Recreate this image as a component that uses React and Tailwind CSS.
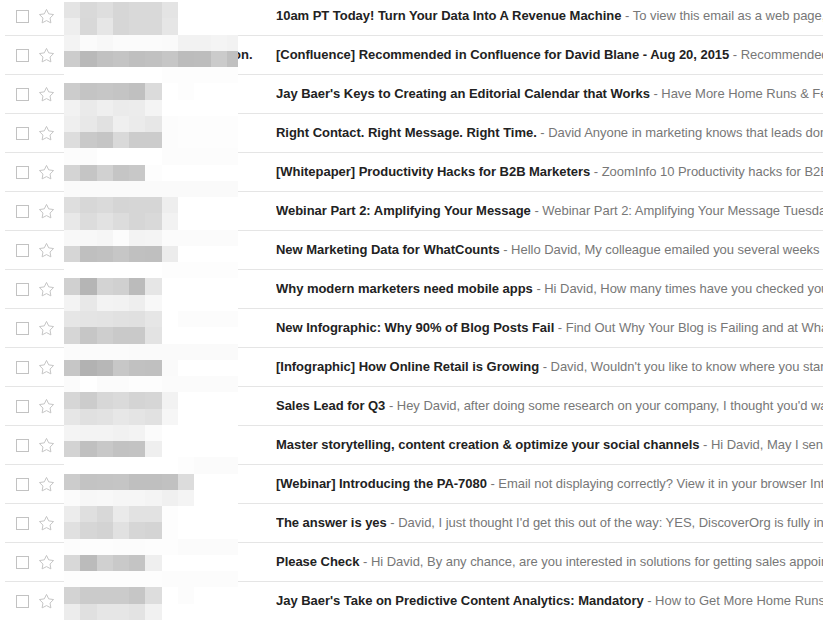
import clsx from 'clsx';

const emails = [
  { subject: '10am PT Today! Turn Your Data Into A Revenue Machine', snippet: 'To view this email as a web page,', tail: 'c' },
  { subject: '[Confluence] Recommended in Confluence for David Blane - Aug 20, 2015', snippet: 'Recommended in Confluence', sender: 'on.' },
  { subject: "Jay Baer's Keys to Creating an Editorial Calendar that Works", snippet: 'Have More Home Runs & Fewer Strikeouts' },
  { subject: 'Right Contact. Right Message. Right Time.', snippet: "David Anyone in marketing knows that leads don't" },
  { subject: '[Whitepaper] Productivity Hacks for B2B Marketers', snippet: 'ZoomInfo 10 Productivity hacks for B2B marketers' },
  { subject: 'Webinar Part 2: Amplifying Your Message', snippet: 'Webinar Part 2: Amplifying Your Message Tuesday' },
  { subject: 'New Marketing Data for WhatCounts', snippet: 'Hello David, My colleague emailed you several weeks ago' },
  { subject: 'Why modern marketers need mobile apps', snippet: 'Hi David, How many times have you checked your phone' },
  { subject: 'New Infographic: Why 90% of Blog Posts Fail', snippet: 'Find Out Why Your Blog is Failing and at What' },
  { subject: '[Infographic] How Online Retail is Growing', snippet: "David, Wouldn't you like to know where you stand" },
  { subject: 'Sales Lead for Q3', snippet: "Hey David, after doing some research on your company, I thought you'd want" },
  { subject: 'Master storytelling, content creation & optimize your social channels', snippet: 'Hi David, May I send' },
  { subject: '[Webinar] Introducing the PA-7080', snippet: 'Email not displaying correctly? View it in your browser Introducing' },
  { subject: 'The answer is yes', snippet: "David, I just thought I'd get this out of the way: YES, DiscoverOrg is fully integrated" },
  { subject: 'Please Check', snippet: 'Hi David, By any chance, are you interested in solutions for getting sales appointments' },
  { subject: "Jay Baer's Take on Predictive Content Analytics: Mandatory", snippet: 'How to Get More Home Runs' },
];

// redacted sender names, one entry per mosaic row (gray level per cell)
const mosaic = [
  'e4 d9 de d6 d9 d9 e4 ff ff ff ff',
  'ee d8 e6 d6 d9 d9 e6 ff ff ff ff',
  'f3 fb f8 fb fb fb fa f2 f2 f4 f2',
  'cc b9 c1 c4 bf c1 c6 bc bd cb c0',
  'ff ff ff ff ff ff fd fd fd fd fd',
  'cc c4 c6 c4 c0 db ff fd ff ff ff',
  'f2 ea ef eb ec f4 ff ff ff ff ff',
  'ef e8 e1 ef eb e7 fc fd fd fd fd',
  'dd c9 c5 d9 cc cc fc fd fd fd fd',
  'fc fc ff ff ff ff fc fc fc fc fc',
  'd4 c5 d1 c5 c8 fd ff ff ff ff ff',
  'fa fa fa fa fa fa fa fa fa fa fa',
  'de d7 da d5 d6 d6 ee ff ff ff ff',
  'e8 dc e2 dc d6 d9 f2 ff ff ff ff',
  'f8 f8 f6 fc f3 f4 fb fb fb fb fb',
  'd6 bf c1 c6 c0 bf ec ff ff ff ff',
  'ff ff ff ff ff ff fd fd fd fd fd',
  'd0 b5 d3 d0 bb e6 ff ff ff ff ff',
  'f3 e8 f3 f2 ee f8 ff ff ff ff ff',
  'e6 e4 e3 e1 e0 e6 ff fc fc fc fc',
  'd6 c6 ce c9 c9 e3 ff ff ff ff ff',
  'fb fb fb fb fa fa fa fa fa fa fa',
  'c6 b2 b7 c7 c1 c0 fa ff ff ff ff',
  'fb ff fb fb fd fd fb fb fb fb fb',
  'd6 cc d7 da d4 d6 f2 ff ff ff ff',
  'e6 e0 e2 e7 e4 e1 f6 ff ff ff ff',
  'f4 f3 f3 f1 f3 fb ff ff ff ff ff',
  'd3 c0 c8 c2 c3 ef ff ff ff ff ff',
  'ff ff ff ff ff ff ff fd fb fb fb',
  'cc c3 c4 c5 bf bf c1 dc ff ff ff',
  'fb f7 f8 f6 f6 f4 f0 f4 ff ff ff',
  'ec df d8 ea e2 e2 fd ff ff ff ff',
  'e0 d6 d3 e1 d6 d4 fd ff ff ff ff',
  'fc fd fd fc fc fd fd fb fb fb fb',
  'd8 bb d0 c9 c4 ef ff ff ff ff ff',
  'fd fd fd fd fd fd fc fc fc fc fc',
  'd3 cb cb cb c6 dd ff fc ff ff ff',
  'ec e0 e6 e6 e3 f1 ff ff ff ff ff',
];

function StarOutline() {
  return (
    <svg width="17" height="17" viewBox="0 0 24 24" className="shrink-0">
      <polygon
        points="12,2 15.09,8.26 22,9.27 17,14.14 18.18,21.02 12,17.77 5.82,21.02 7,14.14 2,9.27 8.91,8.26"
        fill="none"
        stroke="#c4c4c4"
        strokeWidth="1.4"
        strokeLinejoin="miter"
      />
    </svg>
  );
}

function EmailRow({ email }) {
  return (
    <div className="ml-[5px] flex h-[39px] items-center border-b border-[#e5e5e5] whitespace-nowrap">
      <div className="ml-[11px] h-[13px] w-[13px] shrink-0 border border-[#c2c2c2] bg-white" />
      <div className="ml-[9px]">
        <StarOutline />
      </div>
      {/* Sender */}
      <div className="ml-[8px] w-[213px] shrink-0 overflow-hidden pb-[2px] font-bold text-[#222]">
        {email.sender && <span className="ml-[170px]">{email.sender}</span>}
      </div>
      {/* Subject + snippet */}
      <div className="min-w-0 flex-1 overflow-hidden pb-[2px] tracking-[-0.03px]">
        <span className="font-bold text-[#222]">{email.subject}</span>
        <span className="text-[#777]"> - {email.snippet}</span>
        {email.tail && <span className="text-[#e8a23a]">{email.tail}</span>}
      </div>
    </div>
  );
}

export default function App() {
  return (
    <div className="relative h-[620px] w-[823px] overflow-hidden bg-white font-['Liberation_Sans',Arial,sans-serif] text-[13px] leading-none">
      <div className="mt-[-3px]">
        {emails.map((email, i) => (
          <EmailRow key={i} email={email} />
        ))}
      </div>

      {/* Redacted sender names */}
      <div className="absolute left-[64px] top-[2px] grid h-[618px] grid-cols-[repeat(10,16.3px)_11px] grid-rows-[repeat(38,minmax(0,1fr))]">
        {mosaic.flatMap((row, r) =>
          row.split(' ').map((g, c) => (
            <div
              key={`${r}-${c}`}
              className={clsx('h-full w-full')}
              style={{ backgroundColor: `#${g}${g}${g}` }}
            />
          ))
        )}
      </div>
    </div>
  );
}
